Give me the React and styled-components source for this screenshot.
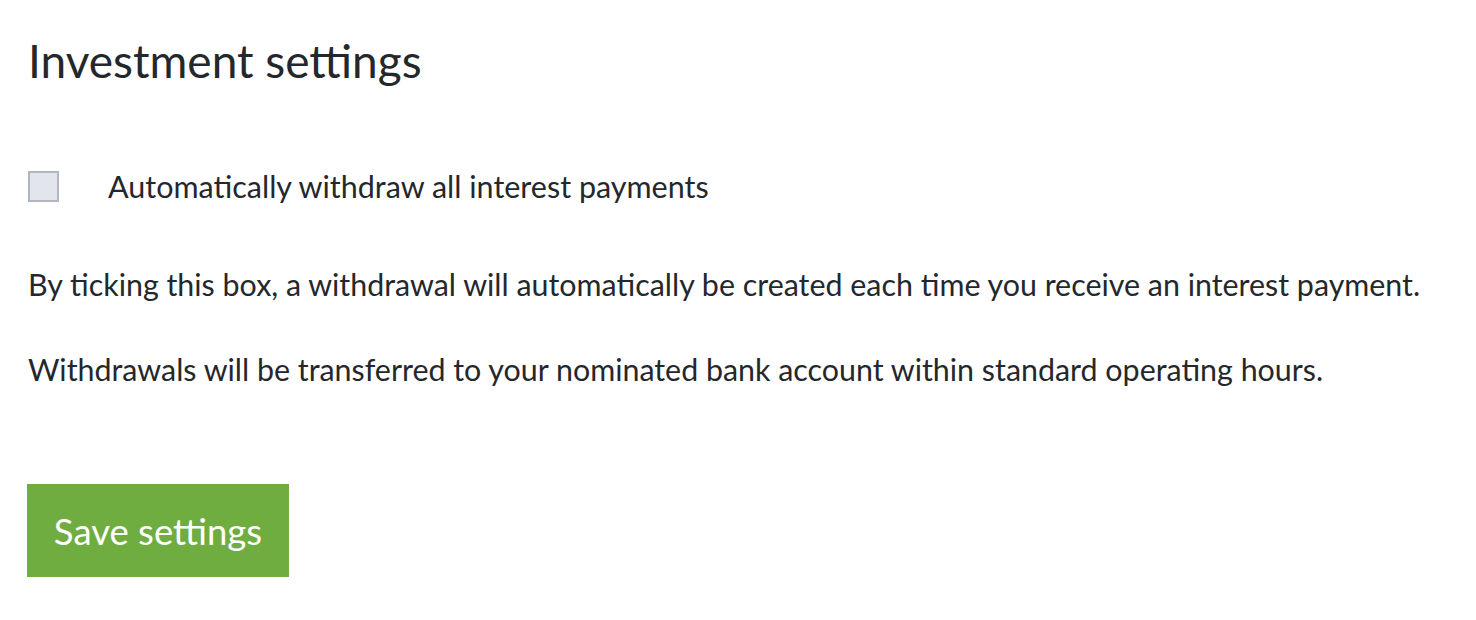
import React from 'react';
import styled, { createGlobalStyle } from 'styled-components';

const GlobalStyle = createGlobalStyle`
  body {
    margin: 0;
    background: #ffffff;
    font-family: Lato, "Noto Sans", sans-serif;
    color: #24272b;
  }
`;

const Page = styled.main`
  padding: 26px 28px 0;
`;

const Title = styled.h1`
  margin: 0 0 70px;
  font-size: 46px;
  font-weight: 400;
  line-height: 70px;
`;

const CheckRow = styled.label`
  display: flex;
  align-items: center;
  gap: 49px;
  font-size: 30.5px;
  line-height: 40px;
  margin-bottom: 58px;
`;

const Box = styled.span`
  flex: none;
  width: 27px;
  height: 27px;
  border: 2px solid #b1b7bf;
  background: #e2e6ec;
`;

const Text = styled.p`
  margin: 0 0 45px;
  font-size: 30.4px;
  line-height: 40px;
`;

const Button = styled.button`
  margin-top: 50px;
  margin-left: -1px;
  width: 262px;
  height: 93px;
  border: 0;
  background: #70ad40;
  color: #ffffff;
  font-family: inherit;
  font-size: 36.5px;
  cursor: pointer;
`;

export default function App() {
  return (
    <Page>
      <GlobalStyle />
      <Title>Investment settings</Title>
      <CheckRow>
        <Box />
        Automatically withdraw all interest payments
      </CheckRow>
      <Text>
        By ticking this box, a withdrawal will automatically be created each time you receive an interest payment.
      </Text>
      <Text>Withdrawals will be transferred to your nominated bank account within standard operating hours.</Text>
      <Button>Save settings</Button>
    </Page>
  );
}
